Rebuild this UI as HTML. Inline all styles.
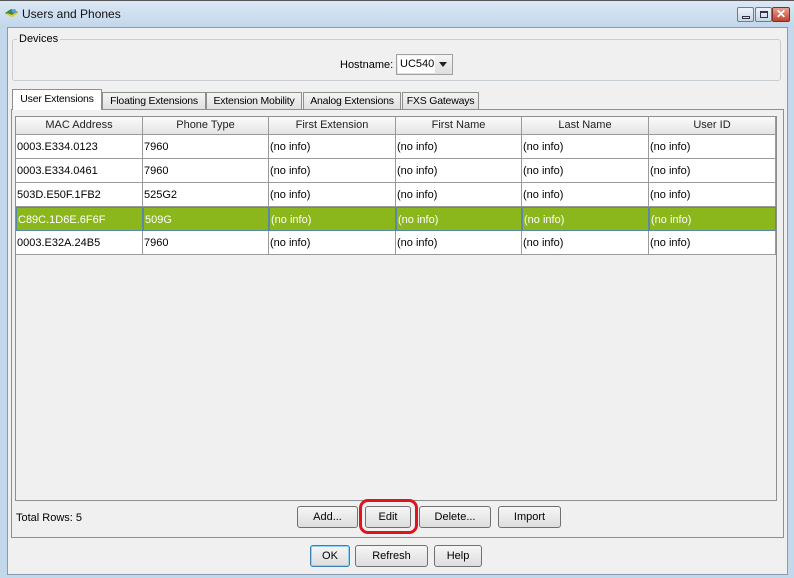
<!DOCTYPE html>
<html><head><meta charset="utf-8"><style>
*{box-sizing:border-box;margin:0;padding:0}
body{width:794px;height:578px;overflow:hidden;background:#c4d8ec;font-family:"Liberation Sans",sans-serif;font-size:11px;color:#000;position:relative}
.a{position:absolute}
.title{left:0;top:0;width:794px;height:28px;background:linear-gradient(#dbe8f5,#c2d6ea);border-top:1px solid #555}
.client{left:7px;top:27px;width:781px;height:548px;background:#f0f0f0;border:1px solid #8a9bb0}
.btn{position:absolute;height:22px;border:1px solid #707070;border-radius:3px;background:linear-gradient(#f6f6f6,#dddddd);text-align:center;line-height:20px;font-size:11px}
.tab{position:absolute;top:92px;height:18px;border:1px solid #8e8f8f;background:linear-gradient(#f4f4f4,#e0e0e0);line-height:16px;text-align:center;font-size:10.5px;white-space:nowrap;overflow:hidden;letter-spacing:-0.2px}
.th{position:absolute;top:117px;height:18px;background:linear-gradient(#fafafa,#e4e4e4);border-right:1px solid #9a9a9a;border-bottom:1px solid #9a9a9a;text-align:center;line-height:17px;color:#222}
.row{position:absolute;left:16px;width:760px;height:24px;background:#fff}
.c{position:absolute;top:0;height:24px;border-right:1px solid #9a9a9a;border-bottom:1px solid #9a9a9a;line-height:25px;padding-left:1px;white-space:nowrap;overflow:hidden}
.sel{background:#8bb61c;color:#fff}
.sel .c{border:1px solid #5a89a8}
.wb{position:absolute;top:7px;width:17px;height:15px;border:1px solid #6d7c8f;border-radius:2px;background:linear-gradient(#eef3f9,#c9d7e6)}
</style></head><body>
<div class="a title"></div>
<svg class="a" style="left:4px;top:7px" width="16" height="13"><path d="M1 6 L7 2 L14 5 L8 10 Z" fill="#3b8a3b"/><path d="M3 7 L8 9 L13 6" stroke="#e6c83a" stroke-width="2" fill="none"/><circle cx="10" cy="4" r="2" fill="#5aa0e0"/></svg>
<div class="a" style="left:22px;top:7px;font-size:12px;color:#111">Users and Phones</div>
<div class="wb" style="left:737px"><div class="a" style="left:4px;top:8px;width:8px;height:3px;border:1px solid #334"></div></div>
<div class="wb" style="left:755px"><div class="a" style="left:4px;top:3px;width:8px;height:7px;border:1px solid #334;border-top-width:2px"></div></div>
<div class="wb" style="left:772px;width:18px;background:linear-gradient(#e8a090,#c2412c);border-color:#7a3020;color:#fff;font-weight:bold;font-size:12px;text-align:center;line-height:13px">✕</div>
<div class="a client"></div>
<div class="a" style="left:12px;top:39px;width:769px;height:42px;border:1px solid #c8cdd2;border-radius:3px"></div>
<div class="a" style="left:17px;top:33px;background:#f0f0f0;padding:0 2px">Devices</div>
<div class="a" style="left:340px;top:59px">Hostname:</div>
<div class="a" style="left:396px;top:54px;width:57px;height:21px;border:1px solid #a0a0a0;background:linear-gradient(#f5f5f5,#dedede)"><div class="a" style="left:1px;top:1px;width:37px;height:17px;background:#fff;line-height:17px;padding-left:2px">UC540</div><div class="a" style="left:42px;top:7px;width:0;height:0;border-left:4px solid transparent;border-right:4px solid transparent;border-top:5px solid #222"></div></div>
<div class="a" style="left:11px;top:109px;width:773px;height:429px;border:1px solid #8e8f8f;background:#f0f0f0"></div>
<div class="tab" style="left:12px;top:89px;width:90px;height:21px;background:#fff;border-bottom:none;line-height:19px">User Extensions</div>
<div class="tab" style="left:102px;width:104px">Floating Extensions</div>
<div class="tab" style="left:206px;width:96px">Extension Mobility</div>
<div class="tab" style="left:303px;width:98px">Analog Extensions</div>
<div class="tab" style="left:402px;width:77px">FXS Gateways</div>
<div class="a" style="left:15px;top:116px;width:762px;height:385px;border:1px solid #8e8f8f;background:#f0f0f0"></div>
<div class="th" style="left:16px;width:127px">MAC Address</div>
<div class="th" style="left:143px;width:126px">Phone Type</div>
<div class="th" style="left:269px;width:127px">First Extension</div>
<div class="th" style="left:396px;width:126px">First Name</div>
<div class="th" style="left:522px;width:127px">Last Name</div>
<div class="th" style="left:649px;width:127px">User ID</div>

<div class="row" style="top:135px"><div class="c" style="left:0;width:127px">0003.E334.0123</div><div class="c" style="left:127px;width:126px">7960</div><div class="c" style="left:253px;width:127px">(no info)</div><div class="c" style="left:380px;width:126px">(no info)</div><div class="c" style="left:506px;width:127px">(no info)</div><div class="c" style="left:633px;width:127px">(no info)</div></div>
<div class="row" style="top:159px"><div class="c" style="left:0;width:127px">0003.E334.0461</div><div class="c" style="left:127px;width:126px">7960</div><div class="c" style="left:253px;width:127px">(no info)</div><div class="c" style="left:380px;width:126px">(no info)</div><div class="c" style="left:506px;width:127px">(no info)</div><div class="c" style="left:633px;width:127px">(no info)</div></div>
<div class="row" style="top:183px"><div class="c" style="left:0;width:127px">503D.E50F.1FB2</div><div class="c" style="left:127px;width:126px">525G2</div><div class="c" style="left:253px;width:127px">(no info)</div><div class="c" style="left:380px;width:126px">(no info)</div><div class="c" style="left:506px;width:127px">(no info)</div><div class="c" style="left:633px;width:127px">(no info)</div></div>
<div class="row sel" style="top:207px"><div class="c" style="left:0;width:127px">C89C.1D6E.6F6F</div><div class="c" style="left:127px;width:126px">509G</div><div class="c" style="left:253px;width:127px">(no info)</div><div class="c" style="left:380px;width:126px">(no info)</div><div class="c" style="left:506px;width:127px">(no info)</div><div class="c" style="left:633px;width:127px">(no info)</div></div>
<div class="row" style="top:231px"><div class="c" style="left:0;width:127px">0003.E32A.24B5</div><div class="c" style="left:127px;width:126px">7960</div><div class="c" style="left:253px;width:127px">(no info)</div><div class="c" style="left:380px;width:126px">(no info)</div><div class="c" style="left:506px;width:127px">(no info)</div><div class="c" style="left:633px;width:127px">(no info)</div></div>

<div class="a" style="left:16px;top:512px">Total Rows: 5</div>
<div class="btn" style="left:297px;top:506px;width:61px">Add...</div>
<div class="btn" style="left:365px;top:506px;width:46px">Edit</div>
<div class="a" style="left:359px;top:499px;width:59px;height:35px;border:3px solid #e0141e;border-radius:9px"></div>
<div class="btn" style="left:419px;top:506px;width:72px">Delete...</div>
<div class="btn" style="left:498px;top:506px;width:63px">Import</div>
<div class="btn" style="left:310px;top:545px;width:40px;border-color:#3c7fb1;box-shadow:inset 0 0 0 1px #8fd3f4">OK</div>
<div class="btn" style="left:355px;top:545px;width:73px">Refresh</div>
<div class="btn" style="left:434px;top:545px;width:48px">Help</div>
</body></html>
